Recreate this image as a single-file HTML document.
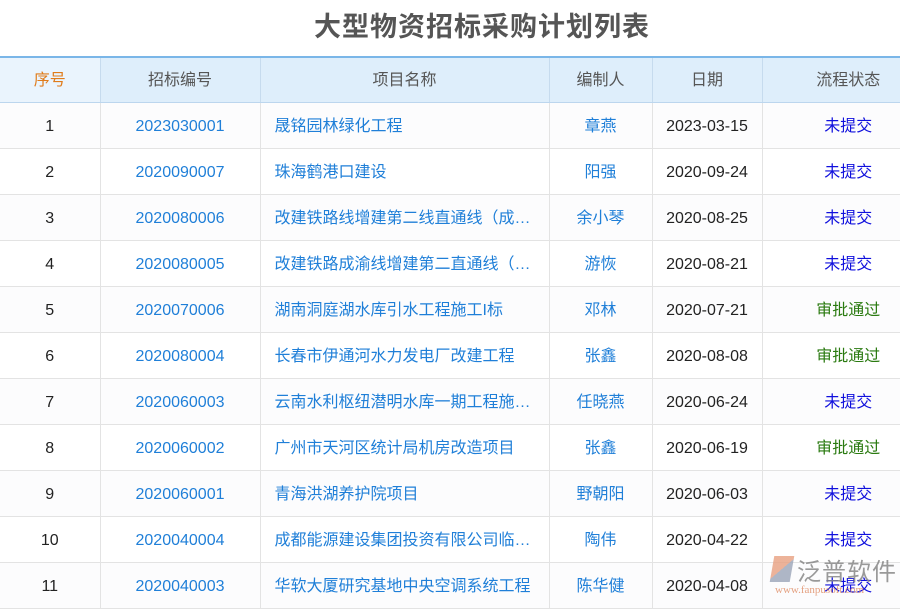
<html><head><style>
body{margin:0;width:900px;height:600px;overflow:hidden;background:#fff;font-family:"Liberation Sans","Noto Sans CJK SC",sans-serif;position:relative}
h1{margin:0;height:56px;line-height:54px;text-align:center;font-size:27px;color:#555;font-weight:bold;letter-spacing:1px;padding-left:64px;box-sizing:border-box}
table{border-collapse:collapse;table-layout:fixed;width:900px;font-size:16px}
th{height:42px;line-height:42px;padding:2px 0 0 0;background:#deeefb;color:#555;font-weight:normal;border-top:2px solid #7ab6e8;border-bottom:1px solid #bcd6ee;border-left:1px solid #c6dbee}
th:first-child{background:#eaf4fd;color:#e07b1a;border-left:none}
td{height:42px;line-height:42px;padding:3px 0 0 0;border-bottom:1px solid #e3e3e3;border-left:1px solid #e3e3e3;text-align:center;color:#222;white-space:nowrap;overflow:hidden;text-overflow:ellipsis}
td:first-child{border-left:none}
tr:nth-child(even) td{background:#fcfcfd}
.b{color:#1f7fd8}td.n{text-align:left;padding-left:14px;padding-right:14px;color:#1f7fd8}
.u{color:#1010dd}.g{color:#2a7a10}
td:last-child,th:last-child{padding-left:34px}
</style></head><body>
<h1>大型物资招标采购计划列表</h1>
<table>
<colgroup><col style="width:100px"><col style="width:160px"><col style="width:289px"><col style="width:103px"><col style="width:110px"><col style="width:138px"></colgroup>
<tr><th>序号</th><th>招标编号</th><th>项目名称</th><th>编制人</th><th>日期</th><th>流程状态</th></tr>
<tr><td>1</td><td class="b">2023030001</td><td class="n">晟铭园林绿化工程</td><td class="b">章燕</td><td>2023-03-15</td><td class="u">未提交</td></tr>
<tr><td>2</td><td class="b">2020090007</td><td class="n">珠海鹤港口建设</td><td class="b">阳强</td><td>2020-09-24</td><td class="u">未提交</td></tr>
<tr><td>3</td><td class="b">2020080006</td><td class="n">改建铁路线增建第二线直通线（成都至重庆</td><td class="b">余小琴</td><td>2020-08-25</td><td class="u">未提交</td></tr>
<tr><td>4</td><td class="b">2020080005</td><td class="n">改建铁路成渝线增建第二直通线（成都至重庆</td><td class="b">游恢</td><td>2020-08-21</td><td class="u">未提交</td></tr>
<tr><td>5</td><td class="b">2020070006</td><td class="n">湖南洞庭湖水库引水工程施工I标</td><td class="b">邓林</td><td>2020-07-21</td><td class="g">审批通过</td></tr>
<tr><td>6</td><td class="b">2020080004</td><td class="n">长春市伊通河水力发电厂改建工程</td><td class="b">张鑫</td><td>2020-08-08</td><td class="g">审批通过</td></tr>
<tr><td>7</td><td class="b">2020060003</td><td class="n">云南水利枢纽潜明水库一期工程施工标</td><td class="b">任晓燕</td><td>2020-06-24</td><td class="u">未提交</td></tr>
<tr><td>8</td><td class="b">2020060002</td><td class="n">广州市天河区统计局机房改造项目</td><td class="b">张鑫</td><td>2020-06-19</td><td class="g">审批通过</td></tr>
<tr><td>9</td><td class="b">2020060001</td><td class="n">青海洪湖养护院项目</td><td class="b">野朝阳</td><td>2020-06-03</td><td class="u">未提交</td></tr>
<tr><td>10</td><td class="b">2020040004</td><td class="n">成都能源建设集团投资有限公司临时工程</td><td class="b">陶伟</td><td>2020-04-22</td><td class="u">未提交</td></tr>
<tr><td>11</td><td class="b">2020040003</td><td class="n">华软大厦研究基地中央空调系统工程</td><td class="b">陈华健</td><td>2020-04-08</td><td class="u">未提交</td></tr>
</table>
<div style="position:absolute;left:772px;top:556px;width:20px;height:26px;background:linear-gradient(135deg,#e8a080 50%,#9aa4b8 50%);opacity:.8;transform:skewX(-10deg)"></div>
<div style="position:absolute;left:797px;top:552px;font-size:24px;color:#888;opacity:.85;letter-spacing:1px">泛普软件</div>
<div style="position:absolute;left:775px;top:584px;font-size:11px;color:#e0906a;font-family:'Liberation Serif',serif;opacity:.85">www.fanpusoft.com</div>
</body></html>
